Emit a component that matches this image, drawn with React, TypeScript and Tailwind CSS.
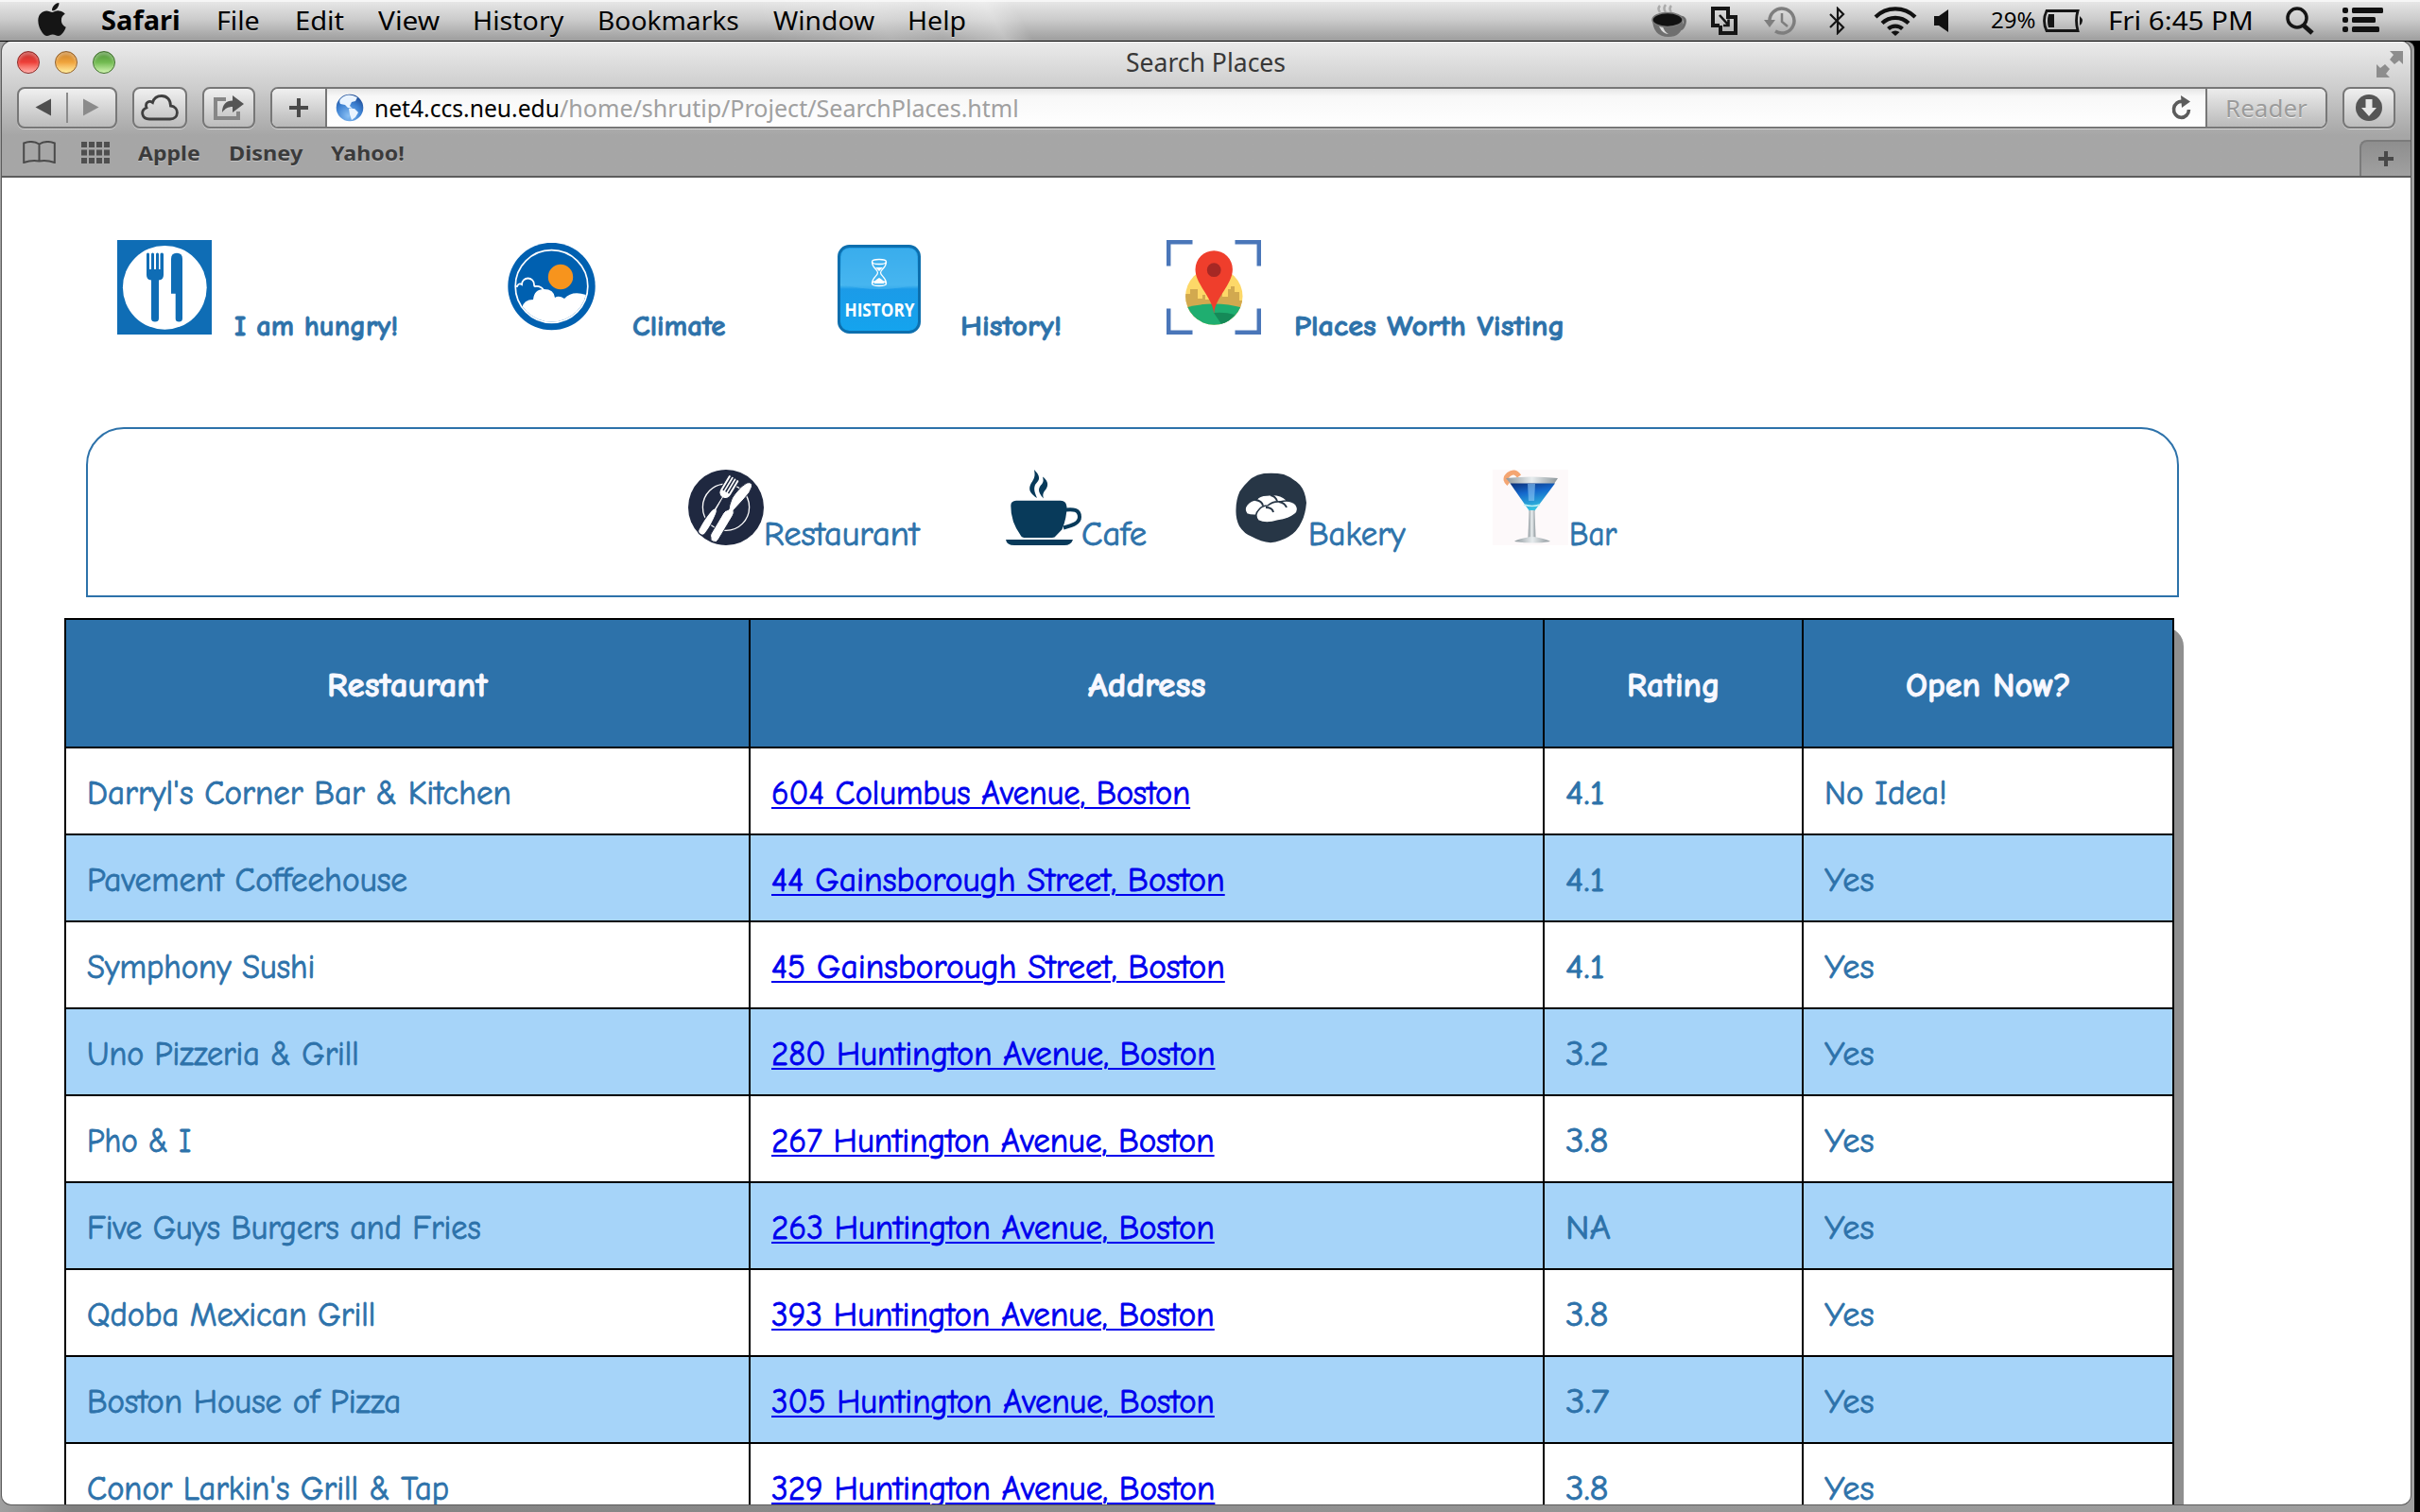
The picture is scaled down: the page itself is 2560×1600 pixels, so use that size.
import { useLayoutEffect, useRef, useState, type ReactNode } from "react";
import { FaApple } from "react-icons/fa";

const UI = "font-['Noto_Sans','Open_Sans',sans-serif]";
const COMIC =
  "font-['Comic_Sans_MS','Comic_Neue','Inter',sans-serif] [font-feature-settings:'cv11'] [font-variant-ligatures:none] [-webkit-text-stroke:0.8px_currentColor]";

/* Sets a single line of text to an exact width. */
function Fit({ w, className = "", children }: { w: number; className?: string; children: ReactNode }) {
  const ref = useRef<HTMLSpanElement>(null);
  const [k, setK] = useState(1);
  useLayoutEffect(() => {
    if (ref.current) setK(w / ref.current.offsetWidth);
  }, [w]);
  return (
    <span className={`inline-block shrink-0 text-left ${className}`} style={{ width: w }}>
      <span
        ref={ref}
        className="inline-block origin-left whitespace-nowrap [text-decoration:inherit]"
        style={{ transform: `scaleX(${k})` }}
      >
        {children}
      </span>
    </span>
  );
}

function MenuBar() {
  return (
    <header
      className={`${UI} relative flex h-11 items-center border-b border-black bg-linear-to-b from-[#e9e9e9] via-[#cacaca] to-[#9d9d9d] text-[28px] leading-[43px] text-black shadow-[inset_0_2px_0_#f6f6f6] [text-shadow:0_1px_0_rgba(255,255,255,0.4)]`}
    >
      <div className="absolute top-0 left-[780px] h-[43px] w-[340px] bg-[linear-gradient(60deg,transparent_10%,rgba(255,255,255,0.18)_45%,rgba(255,255,255,0.08)_60%,rgba(255,255,255,0.3)_78%,transparent_86%)]" />
      <FaApple className="relative -top-[1px] ml-10 h-[41px] w-[30px] shrink-0 text-[#151515]" />
      <Fit w={84} className="relative ml-[37px] font-bold">Safari</Fit>
      <Fit w={46} className="relative ml-[38px]">File</Fit>
      <Fit w={52} className="relative ml-[37px]">Edit</Fit>
      <Fit w={65} className="relative ml-[36px]">View</Fit>
      <Fit w={96} className="relative ml-[35px]">History</Fit>
      <Fit w={150} className="relative ml-[36px]">Bookmarks</Fit>
      <Fit w={107} className="relative ml-[36px]">Window</Fit>
      <Fit w={62} className="relative ml-[35px]">Help</Fit>

      <svg className="ml-[725px] h-[36px] w-[38px] shrink-0" viewBox="0 0 38 36">
        <path d="M9 9q-3-4 0-7M15 9q-3-4 0-8M21 9q-3-4 0-7" fill="none" stroke="#aaa" strokeWidth="2.5" />
        <path d="M30 14q7 0 5 7t-9 7" fill="none" stroke="#6b6b6b" strokeWidth="3" />
        <path d="M1 15q0 20 17 20t15-20z" fill="#6f6f6f" />
        <path d="M8 24q4 8 10 8-5-3-6-8z" fill="#ddd" />
        <ellipse cx="17" cy="17" rx="16" ry="7.500" fill="#111" stroke="#777" strokeWidth="1.500" />
      </svg>
      <svg className="ml-[25px] h-[30px] w-[28px] shrink-0" viewBox="0 0 28 30" fill="none" stroke="#151515" strokeWidth="4">
        <path d="M9 20H2V2h16v9h8v17H10v-8" />
        <path d="M9 9l9 10M18.500 13.500V20H13" strokeWidth="2.600" />
      </svg>
      <svg className="ml-[28px] h-[32px] w-[35px] shrink-0" viewBox="0 0 35 32" fill="none" stroke="#7e7e7e" strokeWidth="3.500">
        <path d="M6 17A13 13 0 1 1 12 27" />
        <path d="M19 8v9l6 5" strokeWidth="2.500" />
        <path d="M0 15h12l-6 8z" fill="#7e7e7e" stroke="none" />
      </svg>
      <svg className="ml-[34px] h-[30px] w-[18px] shrink-0" viewBox="0 0 18 30" fill="none" stroke="#151515" strokeWidth="2.200">
        <path d="M1 8l14 14-6 6V2l6 6L1 22" />
      </svg>
      <svg className="ml-[29px] h-[32px] w-[46px] shrink-0" viewBox="0 0 46 32" fill="none" stroke="#111" strokeWidth="4.200">
        <path d="M2 12a30 30 0 0 1 42 0" />
        <path d="M9 18.500a20 20 0 0 1 28 0" />
        <path d="M15.500 24.500a11 11 0 0 1 15 0" />
        <path d="M18.500 28q4.500-3 9 0L23 32z" fill="#111" stroke="none" />
      </svg>
      <svg className="ml-[18px] h-[24px] w-[15px] shrink-0" viewBox="0 0 15 24">
        <path d="M0 7h5l10-7v24L5 17H0z" fill="#111" />
      </svg>
      <Fit w={47} className="relative -top-[1px] ml-[45px] text-[24px]">29%</Fit>
      <svg className="ml-[8px] h-[24px] w-[43px] shrink-0" viewBox="0 0 43 24">
        <path d="M4 1.500h33q-3 10 0 21H4q-5-10.500 0-21z" fill="none" stroke="#151515" strokeWidth="2.800" />
        <path d="M6 5h6v14H6q-2-7 0-14z" fill="#151515" />
        <path d="M39 7q6 5 0 10z" fill="#151515" />
      </svg>
      <Fit w={154} className="ml-[26px]">Fri 6:45 PM</Fit>
      <svg className="ml-[34px] h-[30px] w-[30px] shrink-0" viewBox="0 0 30 30" fill="none" stroke="#151515">
        <circle cx="12" cy="12" r="10" strokeWidth="3.500" />
        <path d="M19 20l9 8" strokeWidth="5" />
      </svg>
      <svg className="ml-[30px] h-[27px] w-[43px] shrink-0" viewBox="0 0 43 27" fill="#111">
        <rect width="6" height="6" rx="2" /><rect x="10" width="33" height="6" rx="1.500" />
        <rect y="10" width="6" height="6" rx="2" /><rect x="10" y="10" width="25" height="6" rx="1.500" />
        <rect y="20" width="6" height="6" rx="2" /><rect x="10" y="20" width="29" height="6" rx="1.500" />
      </svg>
    </header>
  );
}

const BTN =
  "flex h-11 shrink-0 items-center justify-center rounded-[8px] border-2 border-[#777] bg-linear-to-b from-[#f0f0f0] to-[#bcbcbc] shadow-[0_1px_0_rgba(255,255,255,0.5)]";

function Toolbar() {
  return (
    <div className="flex h-[44px] items-center pl-4">
      <div className={`${BTN} w-[106px]`}>
        <svg className="h-[40px] w-[102px]" viewBox="0 0 102 40">
          <path d="M17.500 19.500L34 10.500v18z" fill="#4e4e4e" />
          <path d="M51 4v32" stroke="#8b8b8b" strokeWidth="2" />
          <path d="M84.500 19.500L68 10.500v18z" fill="#8b8b8b" />
        </svg>
      </div>
      <div className={`${BTN} ml-4 w-[58px]`}>
        <svg className="h-[28px] w-[40px]" viewBox="0 0 40 28" fill="none" stroke="#3f3f3f" strokeWidth="2.800">
          <path d="M9 26C1 26-1 17 6 14 4 8 9 6 12.500 8.500 14 3 18 1.500 22 1.500c6 0 9.500 4.500 9.500 10.500C41 13 40.500 26 31 26z" />
        </svg>
      </div>
      <div className={`${BTN} ml-4 w-[56px]`}>
        <svg className="h-[28px] w-[32px]" viewBox="0 0 32 28">
          <path d="M13 5H2v20h24v-7" fill="none" stroke="#868686" strokeWidth="4" />
          <path d="M9 19C9 11 13 6.500 20 6.500V1l12 9-12 9v-6c-5 0-8 2-11 6z" fill="#555" />
        </svg>
      </div>
      <div className="ml-4 flex h-11 shrink-0 overflow-hidden rounded-[8px] border-2 border-[#777] bg-white shadow-[0_1px_0_rgba(255,255,255,0.5)]">
        <div className="flex w-[58px] items-center justify-center border-r-2 border-[#777] bg-linear-to-b from-[#f0f0f0] to-[#b8b8b8]">
          <svg className="h-5 w-5" viewBox="0 0 20 20"><path d="M10 0v20M0 10h20" stroke="#4a4a4a" strokeWidth="4" /></svg>
        </div>
        <div className={`${UI} flex w-[1987px] items-center bg-linear-to-b from-[#e6e6e6] via-[#f8f8f8] via-20% to-white pl-[9px] text-[25px] leading-10`}>
          <svg className="h-[30px] w-[30px] shrink-0" viewBox="0 0 30 30">
            <defs>
              <radialGradient id="globe" cx=".45" cy=".8" r=".8">
                <stop offset="0" stopColor="#8ac0f4" /><stop offset=".6" stopColor="#3b7fd0" /><stop offset="1" stopColor="#1d4a93" />
              </radialGradient>
            </defs>
            <circle cx="15" cy="15" r="14.300" fill="url(#globe)" />
            <path d="M6 5q5-5 12-3l5 2-2 4-4 1-2 4 3 3-5-1-3-3-5-1q-2-4 1-6zM14 16l6 0 4 4-3 5-4 3-2-6z" fill="#eaf4ff" />
          </svg>
          <Fit w={196} className="ml-[11px] text-black">net4.ccs.neu.edu</Fit>
          <Fit w={486} className="text-[#a0a0a0]">/home/shrutip/Project/SearchPlaces.html</Fit>
          <svg className="ml-[1219px] h-[26px] w-[22px] shrink-0" viewBox="0 0 22 26">
            <path d="M12 6.500A8 8.500 0 1 0 18.500 15" fill="none" stroke="#5c5c5c" strokeWidth="3.600" />
            <path d="M10 0l10 6.500-9 6.500z" fill="#5c5c5c" />
          </svg>
        </div>
        <div className={`${UI} flex w-[127px] items-center justify-center border-l-2 border-[#777] bg-linear-to-b from-[#ececec] to-[#bababa] text-[26px] leading-10 text-[#9b9b9b] [text-shadow:0_1px_0_#f2f2f2]`}>
          <Fit w={87}>Reader</Fit>
        </div>
      </div>
      <div className={`${BTN} ml-[16px] w-[56px]`}>
        <svg className="h-[28px] w-[28px]" viewBox="0 0 28 28">
          <circle cx="14" cy="14" r="14" fill="#555" />
          <path d="M10.500 5h7v9h4.500L14 23 6 14h4.500z" fill="#e6e6e6" />
        </svg>
      </div>
    </div>
  );
}

function WindowChrome() {
  return (
    <div className={`${UI} relative h-36 border-b-2 border-[#5c5c5c] bg-linear-to-b from-[#ebebeb] via-[#cdcdcd] via-35% to-[#a6a6a6] to-70% shadow-[inset_0_1px_0_#fff]`}>
      <div className="flex h-[48px] items-start pt-[10px] pl-4">
        <span className="size-6 rounded-full border-[1.500px] border-[#8c2a27] bg-linear-to-b from-[#c0312c] via-[#ee3f39] to-[#ffb1ae] shadow-[inset_0_3px_3px_rgba(255,255,255,0.3)]" />
        <span className="ml-4 size-6 rounded-full border-[1.500px] border-[#92602a] bg-linear-to-b from-[#c87f28] via-[#f0a43c] to-[#fff0a0] shadow-[inset_0_3px_3px_rgba(255,255,255,0.3)]" />
        <span className="ml-4 size-6 rounded-full border-[1.500px] border-[#3f6f2c] bg-linear-to-b from-[#4f9038] via-[#72bb51] to-[#d2f5b2] shadow-[inset_0_3px_3px_rgba(255,255,255,0.3)]" />
        <Fit w={169} className="-mt-[10px] ml-[1069px] text-[27px] leading-[44px] text-[#383838]">Search Places</Fit>
        <svg className="ml-[1154px] h-[28px] w-[28px]" viewBox="0 0 28 28" fill="#8d8d8d">
          <path d="M14 0h14v14l-4-4-5 4-5-5 4-5zM0 28V14l4 4 5-4 5 5-4 5 4 4z" />
        </svg>
      </div>
      <Toolbar />
      <div className="flex h-[50px] items-center pl-[22px] text-[22px] leading-[50px] font-bold text-[#3b3b3b] [text-shadow:0_1px_0_rgba(255,255,255,0.35)]">
        <svg className="h-[24px] w-[35px]" viewBox="0 0 35 24" fill="none" stroke="#4a4a4a" strokeWidth="2">
          <path d="M17.500 3.500Q10-1 1.200 2.500V23q8.500-3 16.300-1.500Q25 20 33.800 23V2.500Q25-1 17.500 3.500zV21.500" />
        </svg>
        <svg className="ml-[27px] h-[23px] w-[30px]" viewBox="0 0 30 23" fill="#4f4f4f">
          {[0, 8.5, 17].map((y) => [0, 8, 16, 24].map((x) => <rect key={`${x}-${y}`} x={x} y={y} width="6" height="6" />))}
        </svg>
        <Fit w={66} className="ml-[30px]">Apple</Fit>
        <Fit w={78} className="ml-[30px]">Disney</Fit>
        <Fit w={78} className="ml-[30px]">Yahoo!</Fit>
      </div>
      <div className="absolute right-0 bottom-0 flex h-[38px] w-[54px] items-center justify-center rounded-tl-[8px] border-t-2 border-l-2 border-[#7b7b7b] bg-linear-to-b from-[#8e8e8e] to-[#a0a0a0]">
        <svg className="h-4 w-4" viewBox="0 0 16 16"><path d="M8 0v16M0 8h16" stroke="#484848" strokeWidth="4" /></svg>
      </div>
    </div>
  );
}

function HungryIcon() {
  return (
    <svg className="h-[100px] w-[100px] shrink-0" viewBox="0 0 100 100" fill="#0f6db5">
      <rect width="100" height="100" />
      <circle cx="50.300" cy="50.300" r="44.400" fill="#fff" />
      <path d="M31 15q0-1.500 1.500-1.500T34 15v16h2V15q0-1.500 1.500-1.500T39 15v16h2V15q0-1.500 1.500-1.500T44 15v16h1.500V15q0-1.500 1.700-1.500T49 15v22q0 5-5 5.500V83q0 3.500-4 3.500T36 83V42.500q-5-.5-5-5.500z" />
      <path d="M57 56.700V20q0-6.300 6-6.300t6 6.300v63q0 3.500-3.700 3.500T61.700 83V56.700z" />
    </svg>
  );
}

function ClimateIcon() {
  return (
    <svg className="h-[93px] w-[93px] shrink-0" viewBox="0 0 93 93">
      <defs><clipPath id="sky"><circle cx="46.500" cy="46" r="37.500" /></clipPath></defs>
      <circle cx="46.500" cy="46" r="46.200" fill="#0060b0" />
      <circle cx="46.500" cy="46" r="38.300" fill="none" stroke="#fff" strokeWidth="1.700" />
      <circle cx="56" cy="36" r="13.200" fill="#f7941d" />
      <g clipPath="url(#sky)">
        <path d="M7 46h3q2-4 5-2a6.500 6.500 0 0 1 13 0q0 2 1 2 6-1 9 4" fill="none" stroke="#fff" strokeWidth="1.800" />
        <path d="M15 95V69q2-9 12-9Q28 49 38.500 49T50 58q4-3 10 1 8-9 23-4l10 5v40z" fill="#fff" />
      </g>
    </svg>
  );
}

function HistoryIcon() {
  return (
    <svg className="h-[94px] w-[88px] shrink-0" viewBox="0 0 88 94">
      <defs>
        <linearGradient id="hist" x1="0" y1="0" x2="0" y2="1">
          <stop offset="0" stopColor="#1f9ce4" /><stop offset=".45" stopColor="#4bb9f0" /><stop offset=".5" stopColor="#1b9be8" /><stop offset="1" stopColor="#14a4ee" />
        </linearGradient>
      </defs>
      <rect x="1.500" y="1.500" width="85" height="91" rx="11" fill="url(#hist)" stroke="#0d6fae" strokeWidth="3" />
      <path d="M4 42V13Q4 4 13 4h62q9 0 9 9v29q-40 10-80 0z" fill="#45b3ef" opacity=".7" />
      <g fill="none" stroke="#fff" strokeWidth="1.300">
        <ellipse cx="44" cy="18" rx="7.500" ry="2.500" /><ellipse cx="44" cy="41" rx="7.500" ry="2.500" />
        <path d="M36.500 18c0 7 6 8 6 11.500s-6 5-6 11.500M51.500 18c0 7-6 8-6 11.500s6 5 6 11.500" />
      </g>
      <path d="M40 24h8l-4 4zM38.500 41q1-4 5.500-6 4.500 2 5.500 6z" fill="#fff" />
      <text x="44.500" y="76" textAnchor="middle" textLength="74" lengthAdjust="spacingAndGlyphs" fill="#fff" className="font-['Open_Sans'] text-[20px] font-bold [-webkit-text-stroke:0]">HISTORY</text>
    </svg>
  );
}

function PlacesIcon() {
  return (
    <svg className="h-[100px] w-[100px] shrink-0" viewBox="0 0 100 100">
      <defs><clipPath id="town"><circle cx="50.300" cy="59.500" r="30.200" /></clipPath></defs>
      <path d="M2.200 27.500V2.200h25.300M72.500 2.200h25.300v25.300M97.800 72.500v25.300H72.500M27.500 97.800H2.200V72.500" fill="none" stroke="#4a76b9" strokeWidth="4.500" />
      <g clipPath="url(#town)">
        <rect x="18" y="25" width="64" height="66" fill="#fdd868" />
        <path d="M18 57h7v-5h8v10h5v-4h3v5h14v-8h4v5h6V52h3v-3h4v6h5v9h5v20H18z" fill="#d2a94f" />
        <path d="M18 72q32-9 64 0v20H18z" fill="#1fae70" />
        <path d="M50 77q12-1 22 2L60 92z" fill="#158a58" />
      </g>
      <path d="M50.200 78C49 61 30.500 47 30.500 31a19.700 19.700 0 0 1 39.400 0c0 16-18.500 30-19.700 47z" fill="#ef3e2c" />
      <circle cx="50.200" cy="31.700" r="7.400" fill="#a62824" />
    </svg>
  );
}

function RestaurantIcon() {
  return (
    <svg className="h-20 w-20 shrink-0" viewBox="0 0 80 80">
      <circle cx="40" cy="40" r="40" fill="#1f2840" />
      <circle cx="40" cy="39.700" r="24.600" fill="none" stroke="#fff" strokeWidth="1.300" />
      <g stroke="#1f2840" strokeWidth="1">
        <g transform="translate(14.500 65.500) rotate(31)">
          <path d="M-4-1q-1-10 1-23 .5-3 1.800-4l.2-14q-5.500-1-5.500-7V-65q0-1.500 1.300-1.500H5.200q1.300 0 1.300 1.500v16q0 6-5.500 7l.4 14q1.300 1 1.800 4 2 13 1 23 0 4.500-4.100 4.500T-4-1z" fill="#fff" />
          <path d="M-3.200-67v18M0-67v18M3.200-67v18" strokeWidth="1.500" />
        </g>
        <path d="M24 72q-1-2 0-4l13-22q2-3 6-4l1-5q2-8 6-12 6-8 12-11 6-1.500 5.500 4Q66 24 59 31L48 43q1 3-1 6L32 74q-2 4-6 2-3-1-2-4z" fill="#fff" />
      </g>
    </svg>
  );
}

function CafeIcon() {
  return (
    <svg className="h-20 w-20 shrink-0" viewBox="0 0 80 80" fill="#083a5a">
      <path d="M0 74h71q-2 6-9 6H9q-8 0-9-6z" />
      <path d="M11 32.700h47q6 0 6.500 6.500 0 12-5 24L53 70q-1 2-4 2H21q-4 0-5-2Q5 55 5.300 38q0-5 5.700-5.300z" />
      <path d="M63 42.500c8-1 15-.5 15 7.500 0 7-8 9-17 11.500" fill="none" stroke="#083a5a" strokeWidth="4" />
      <path d="M30 0c9 9 4 12 1 16-2 5 0 9 2 14C24 24 24 20 27 14c4-6 4-8 3-14zM39 7.500c7 5 6 11 2 15-2 3-2 5-1 8-6-6-6-10-3-14 3-3 3-5 2-9z" />
    </svg>
  );
}

function BakeryIcon() {
  return (
    <svg className="h-20 w-20 shrink-0" viewBox="0 0 80 80">
      <path d="M33 4q12-1 21 1 9 3 17 11 6 7 7 19-1 12-5 20-5 11-14 16-8 5-19 6.300-10-1-20-6.600-8-3-13-11Q3 52 3.500 42q0-10 4-19Q13 15 20 9q6-4 13-5z" fill="#273646" />
      <g fill="#fff" stroke="#273646" strokeWidth="1.600">
        <path d="M15 47q-4-5 0-10 4-5 10-5 3-5 11-5 14-2 21 5l-1 4q-9 0-16 4-9 3-13 8-7 1-12-1z" />
        <path d="M27 54q-5-6 1-12 3-4 9-4 6-5 13-4 11-3 17 3 4 6-1 10-6 5-18 7-13 4-21 0z" />
        <path d="M24 32q7 1 8 6M40 27q5 1 7 6M35 40q7 0 8 5M49 34q6 1 8 6" fill="none" strokeWidth="2" />
      </g>
    </svg>
  );
}

function BarIcon() {
  return (
    <svg className="h-20 w-20 shrink-0" viewBox="0 0 80 80">
      <defs>
        <linearGradient id="drink" x1="0" y1="0" x2=".3" y2="1">
          <stop offset="0" stopColor="#0b2f78" /><stop offset=".4" stopColor="#1467cb" /><stop offset="1" stopColor="#35c3e0" />
        </linearGradient>
        <linearGradient id="steel" x1="0" y1="0" x2="1" y2="0">
          <stop offset="0" stopColor="#8e979c" /><stop offset=".5" stopColor="#e7ecee" /><stop offset="1" stopColor="#8e979c" />
        </linearGradient>
      </defs>
      <rect width="80" height="80" fill="#fdf9fa" />
      <path d="M17 15q-6-5 0-10t11 2" fill="none" stroke="#f4a572" strokeWidth="5" />
      <path d="M14 9q27-3 55 0l-4 6H19z" fill="url(#steel)" />
      <path d="M18.500 14.500h47.500L44 44h-5z" fill="url(#drink)" />
      <path d="M37 15h8l-1 18h-6z" fill="#8dc8f5" opacity=".6" />
      <path d="M33 37q9 3 17 0" fill="none" stroke="#baf0f5" strokeWidth="1.500" />
      <path d="M38.500 43h6l1 29h-8z" fill="url(#steel)" />
      <path d="M23 76q2-2 12-4 7-2 14 0 9 2 12 4-17 3-38 0z" fill="url(#steel)" />
    </svg>
  );
}

const ROWS: [string, number, string, number, string, number, string, number][] = [
  ["Darryl's Corner Bar & Kitchen", 449, "604 Columbus Avenue, Boston", 443, "4.1", 42, "No Idea!", 130],
  ["Pavement Coffeehouse", 339, "44 Gainsborough Street, Boston", 480, "4.1", 42, "Yes", 53],
  ["Symphony Sushi", 241, "45 Gainsborough Street, Boston", 480, "4.1", 42, "Yes", 53],
  ["Uno Pizzeria & Grill", 288, "280 Huntington Avenue, Boston", 469, "3.2", 46, "Yes", 53],
  ["Pho & I", 110, "267 Huntington Avenue, Boston", 469, "3.8", 46, "Yes", 53],
  ["Five Guys Burgers and Fries", 417, "263 Huntington Avenue, Boston", 469, "NA", 48, "Yes", 53],
  ["Qdoba Mexican Grill", 305, "393 Huntington Avenue, Boston", 469, "3.8", 46, "Yes", 53],
  ["Boston House of Pizza", 332, "305 Huntington Avenue, Boston", 469, "3.7", 46, "Yes", 53],
  ["Conor Larkin's Grill & Tap", 383, "329 Huntington Avenue, Boston", 469, "3.8", 46, "Yes", 53],
];

const COLS = "grid grid-cols-[722px_838px_272px_390px] gap-x-[2px]";
const HEAD = "flex items-center justify-center bg-[#2d72aa] pt-[5px]";

function PlacesTable() {
  return (
    <div className="mt-[22px] ml-[66px] w-[2232px] rounded-[20px] text-[35.5px] leading-10 text-[#2d72aa] shadow-[10px_10px_0_#8f8f8f]">
      <div className="flex flex-col gap-[2px] bg-black p-[2px]">
        <div className={`${COLS} h-[134px] font-bold text-[#f8f8ff]`}>
          <div className={HEAD}><Fit w={170}>Restaurant</Fit></div>
          <div className={HEAD}><Fit w={125}>Address</Fit></div>
          <div className={HEAD}><Fit w={99}>Rating</Fit></div>
          <div className={HEAD}><Fit w={175}>Open Now?</Fit></div>
        </div>
        {ROWS.map(([name, nw, addr, aw, rating, rw, open, ow], i) => {
          const cell = `flex items-center pt-[5px] pl-[22px] ${i % 2 ? "bg-[#a6d4f9]" : "bg-white"}`;
          return (
            <div key={name} className={`${COLS} h-[90px]`}>
              <div className={cell}><Fit w={nw}>{name}</Fit></div>
              <div className={cell}>
                <a className="flex text-[#0000ee]">
                  <Fit w={aw} className="underline decoration-2 underline-offset-[3px]">{addr}</Fit>
                </a>
              </div>
              <div className={cell}><Fit w={rw}>{rating}</Fit></div>
              <div className={cell}><Fit w={ow}>{open}</Fit></div>
            </div>
          );
        })}
      </div>
    </div>
  );
}

function Page() {
  return (
    <main className={`${COMIC} h-[1404px] overflow-hidden bg-white text-[#2d72aa]`}>
      <nav className="flex h-[264px] items-start pt-[66px] pl-[122px] text-[31px] leading-10 font-bold">
        <HungryIcon />
        <Fit w={173} className="mt-[71px] ml-[24px]">I am hungry!</Fit>
        <div className="mt-[3px] ml-[116px]"><ClimateIcon /></div>
        <Fit w={99} className="mt-[71px] ml-[39px]">Climate</Fit>
        <div className="mt-[5px] ml-[118px]"><HistoryIcon /></div>
        <Fit w={107} className="mt-[71px] ml-[42px]">History!</Fit>
        <div className="ml-[111px]"><PlacesIcon /></div>
        <Fit w={286} className="mt-[71px] ml-[35px]">Places Worth Visting</Fit>
      </nav>
      <section className="ml-[89px] flex h-[180px] w-[2214px] items-start rounded-t-[40px] border-2 border-[#2d72aa] pt-[43px] pl-[635px] text-[35.5px] leading-10">
        <RestaurantIcon />
        <Fit w={164} className="mt-[49px]">Restaurant</Fit>
        <div className="ml-[92px]"><CafeIcon /></div>
        <Fit w={69} className="mt-[49px]">Cafe</Fit>
        <div className="ml-[91px]"><BakeryIcon /></div>
        <Fit w={103} className="mt-[49px]">Bakery</Fit>
        <div className="ml-[92px]"><BarIcon /></div>
        <Fit w={50} className="mt-[49px] ml-[1px]">Bar</Fit>
      </section>
      <PlacesTable />
    </main>
  );
}

export default function App() {
  return (
    <div className="h-[1600px] w-[2560px] overflow-hidden bg-black">
      <MenuBar />
      <div className="flex h-[1556px] w-[2554px] flex-col rounded-tr-[8px] bg-linear-to-r from-[#a0a0a0] via-[#7f7f7f] via-3% to-[#a0a0a0]">
        <div className="ml-[2px] h-[1548px] w-[2548px] shrink-0 overflow-hidden rounded-[10px] shadow-[0_0_0_1px_#5c5c5c]">
          <WindowChrome />
          <Page />
        </div>
      </div>
    </div>
  );
}
